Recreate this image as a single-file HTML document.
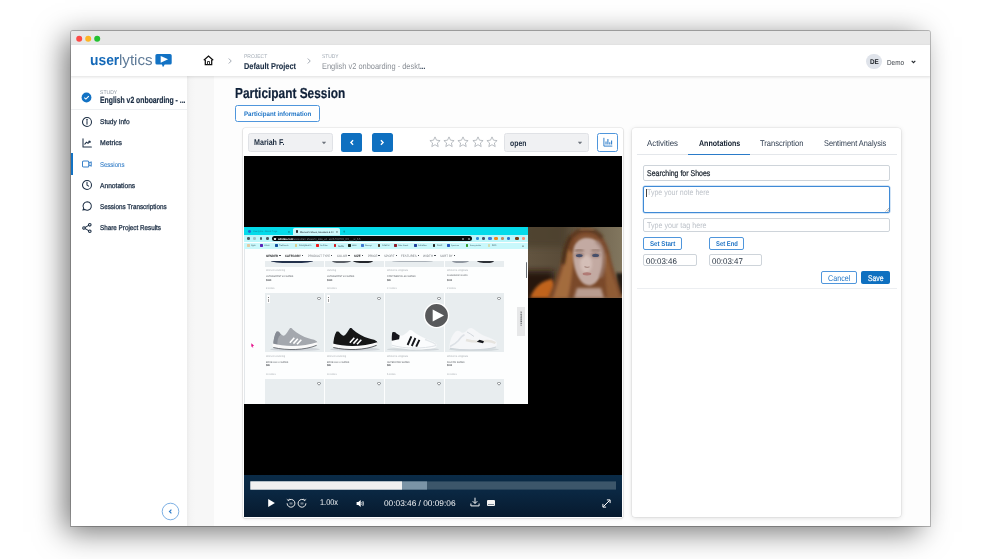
<!DOCTYPE html>
<html><head><meta charset="utf-8"><title>Participant Session</title>
<style>
html,body{margin:0;padding:0;background:#fff;}
body{width:1000px;height:559px;position:relative;overflow:hidden;font-family:"Liberation Sans",sans-serif;}
div,span.t,svg.a{position:absolute;box-sizing:border-box;}
span.t{white-space:nowrap;transform-origin:0 50%;display:block;text-rendering:geometricPrecision;}
</style></head><body>
<div style="left:0;top:0;width:1000px;height:559px;will-change:transform;">
<div style="left:77.00px;top:49.00px;width:830.50px;height:471.00px;background:#fff;box-shadow:0 0 28px 12px rgba(0,0,0,.55);"></div><div style="left:71.00px;top:31.00px;width:859.00px;height:495.00px;background:#fff;border-radius:2px 2px 0 0;box-shadow:0 0 0 .9px rgba(0,0,0,.26);"></div><div style="left:71px;top:31px;width:859px;height:495px;overflow:hidden;border-radius:2px 2px 0 0;"><div style="left:-71px;top:-31px;width:1000px;height:559px;"><div style="left:70.00px;top:31.00px;width:861.00px;height:14.00px;background:#e7e7e7;"></div><svg class="a" style="left:74px;top:33px;" width="30" height="12" viewBox="0 0 30 12"><circle cx="5.2" cy="5.7" r="3" fill="#fc4946"/><circle cx="14.2" cy="5.7" r="3" fill="#fdb525"/><circle cx="23.2" cy="5.7" r="3" fill="#23c131"/></svg><div style="left:70.00px;top:45.00px;width:861.00px;height:481.00px;background:#fdfdfd;"></div><div style="left:187.00px;top:76.00px;width:27.00px;height:450.00px;background:linear-gradient(90deg,#ececec 0,#f4f4f4 3px,#f7f7f7 8px,#f7f7f7 100%);"></div><div style="left:70.00px;top:76.00px;width:117.00px;height:450.00px;background:#fff;"></div><div style="left:70.00px;top:45.00px;width:861.00px;height:31.00px;background:#fff;box-shadow:0 1px 3px rgba(0,0,0,.13);"></div><span class="t" style="left:90.00px;top:51.60px;font-size:15px;line-height:18px;font-weight:700;color:#1469b8;transform:scaleX(0.9215);">user</span><span class="t" style="left:119.40px;top:51.60px;font-size:15px;line-height:18px;font-weight:400;color:#5f7b98;transform:scaleX(1.0077);">lytics</span><svg class="a" style="left:154.5px;top:53px;" width="18" height="16" viewBox="0 0 18 16">
<path d="M2 .9h13.1a1.6 1.6 0 0 1 1.6 1.6v7.5a1.6 1.6 0 0 1-1.6 1.6H9.7L8 14.3 6.9 11.6H2A1.6 1.6 0 0 1 .4 10V2.5A1.6 1.6 0 0 1 2 .9z" fill="#1272c4"/>
<path d="M5.7 2.9 13.1 6.3 5.7 9.7z" fill="#fff"/></svg><svg class="a" style="left:202.5px;top:55.200px;" width="11" height="11" viewBox="0 0 11 11">
<path d="M.8 5.300 5.500 1.100 10.200 5.300" fill="none" stroke="#111" stroke-width="1.25"/>
<path d="M2.300 4.800V9.700H8.700V4.800" fill="none" stroke="#111" stroke-width="1.25"/>
<path d="M4.500 9.700V6.500H6.500V9.700" fill="none" stroke="#222" stroke-width=".9"/></svg><svg class="a" style="left:227.20px;top:56.80px;" width="6" height="8" viewBox="0 0 6 8"><path d="M1.75 1.50L4.25 4 1.75 6.50" fill="none" stroke="#a3aab3" stroke-width="1.0"/></svg><svg class="a" style="left:305.50px;top:56.80px;" width="6" height="8" viewBox="0 0 6 8"><path d="M1.75 1.50L4.25 4 1.75 6.50" fill="none" stroke="#a3aab3" stroke-width="1.0"/></svg><span class="t" style="left:243.60px;top:54.40px;font-size:5.4px;line-height:7px;font-weight:400;color:#a2abb5;transform:scaleX(0.9217);">PROJECT</span><span class="t" style="left:243.60px;top:60.80px;font-size:8.5px;line-height:11px;font-weight:700;color:#1d2f45;transform:scaleX(0.8667);-webkit-text-stroke:.12px #1d2f45;">Default Project</span><span class="t" style="left:322.20px;top:54.40px;font-size:5.4px;line-height:7px;font-weight:400;color:#a2abb5;transform:scaleX(0.9080);">STUDY</span><span class="t" style="left:322.20px;top:60.80px;font-size:8.5px;line-height:11px;font-weight:400;color:#8a8f96;transform:scaleX(0.8750);">English v2 onboarding - deskt</span><span class="t" style="left:420.40px;top:60.80px;font-size:8.5px;line-height:11px;font-weight:700;color:#1d2f45;transform:scaleX(0.7612);">...</span><div style="left:865.90px;top:53.60px;width:15.80px;height:15.80px;background:#dfe3ea;border-radius:50%;"></div><span class="t" style="left:869.60px;top:57.70px;font-size:6.8px;line-height:9px;font-weight:700;color:#1b1f24;transform:scaleX(0.9309);">DE</span><span class="t" style="left:887.20px;top:57.70px;font-size:7.3px;line-height:9px;font-weight:400;color:#3b4047;transform:scaleX(0.8732);">Demo</span><svg class="a" style="left:909.5px;top:58.500px;" width="7" height="6" viewBox="0 0 7 6"><path d="M1.700 1.900 3.500 3.700 5.300 1.900" fill="none" stroke="#23272c" stroke-width="1.150"/></svg><svg class="a" style="left:81px;top:92.100px;" width="11" height="11" viewBox="0 0 11 11"><circle cx="5.500" cy="5.500" r="4.900" fill="#1272c4"/><path d="M3.300 5.600 4.900 7.100 7.800 4.100" fill="none" stroke="#fff" stroke-width="1.100"/></svg><span class="t" style="left:99.80px;top:89.70px;font-size:5.3px;line-height:7px;font-weight:400;color:#8e98a3;transform:scaleX(0.9581);">STUDY</span><span class="t" style="left:99.80px;top:95.00px;font-size:9px;line-height:11px;font-weight:700;color:#1d2f45;transform:scaleX(0.7599);-webkit-text-stroke:.22px #1d2f45;">English v2 onboarding - ...</span><div style="left:70.00px;top:108.60px;width:117.00px;height:1.00px;background:#eef0f2;"></div><div style="left:71.00px;top:153.00px;width:2.40px;height:21.60px;background:#1272c4;"></div><svg class="a" style="left:80.500px;top:115.50px;" width="12" height="12" viewBox="0 0 12 12" fill="none" stroke="#1d2f45" stroke-width="1.05" stroke-linecap="round" stroke-linejoin="round"><circle cx="6" cy="6" r="4.500"/><path d="M6 5.400V8.300"/><circle cx="6" cy="3.800" r=".35" fill="#1d2f45"/></svg><span class="t" style="left:99.80px;top:118.00px;font-size:7px;line-height:9px;font-weight:400;color:#1d2f45;transform:scaleX(0.9388);-webkit-text-stroke:.28px #1d2f45;">Study Info</span><svg class="a" style="left:80.500px;top:136.80px;" width="12" height="12" viewBox="0 0 12 12" fill="none" stroke="#1d2f45" stroke-width="1.05" stroke-linecap="round" stroke-linejoin="round"><path d="M2 1.800V10H10.400"/><path d="M3.800 7.200 5.600 5.200 7 6.300 8.900 4.300"/><path d="M7.700 4.200H9V5.500"/></svg><span class="t" style="left:99.80px;top:139.30px;font-size:7px;line-height:9px;font-weight:400;color:#1d2f45;transform:scaleX(0.9751);-webkit-text-stroke:.28px #1d2f45;">Metrics</span><svg class="a" style="left:80.500px;top:157.90px;" width="12" height="12" viewBox="0 0 12 12" fill="none" stroke="#3b82c9" stroke-width="1.05" stroke-linecap="round" stroke-linejoin="round"><rect x="1.500" y="3" width="6.300" height="6" rx="1.100"/><path d="M7.900 5 10.200 3.900V8.100L7.900 7"/></svg><span class="t" style="left:99.80px;top:160.80px;font-size:7px;line-height:9px;font-weight:400;color:#3b82c9;transform:scaleX(0.8590);-webkit-text-stroke:.12px #3b82c9;">Sessions</span><svg class="a" style="left:80.500px;top:179.10px;" width="12" height="12" viewBox="0 0 12 12" fill="none" stroke="#1d2f45" stroke-width="1.05" stroke-linecap="round" stroke-linejoin="round"><circle cx="6" cy="6" r="4.500"/><path d="M6 3.300V6.100L7.700 7.100"/></svg><span class="t" style="left:99.80px;top:181.60px;font-size:7px;line-height:9px;font-weight:400;color:#1d2f45;transform:scaleX(0.9518);-webkit-text-stroke:.28px #1d2f45;">Annotations</span><svg class="a" style="left:80.500px;top:200.40px;" width="12" height="12" viewBox="0 0 12 12" fill="none" stroke="#1d2f45" stroke-width="1.05" stroke-linecap="round" stroke-linejoin="round"><path d="M6.200 1.800a4.200 4.200 0 1 1-2.500 7.600L1.900 10.100 2.700 8.300A4.200 4.200 0 0 1 6.200 1.800z"/></svg><span class="t" style="left:99.80px;top:202.90px;font-size:7px;line-height:9px;font-weight:400;color:#1d2f45;transform:scaleX(0.9010);-webkit-text-stroke:.28px #1d2f45;">Sessions Transcriptions</span><svg class="a" style="left:80.500px;top:221.70px;" width="12" height="12" viewBox="0 0 12 12" fill="none" stroke="#1d2f45" stroke-width="1.05" stroke-linecap="round" stroke-linejoin="round"><circle cx="8.800" cy="2.800" r="1.300"/><circle cx="3" cy="6" r="1.300"/><circle cx="8.800" cy="9.200" r="1.300"/><path d="M4.200 5.400 7.600 3.400M4.200 6.600 7.600 8.600"/></svg><span class="t" style="left:99.80px;top:224.20px;font-size:7px;line-height:9px;font-weight:400;color:#1d2f45;transform:scaleX(0.9010);-webkit-text-stroke:.28px #1d2f45;">Share Project Results</span><svg class="a" style="left:160.500px;top:502.100px;" width="19" height="19" viewBox="0 0 19 19"><circle cx="9.500" cy="9.500" r="8.300" fill="#fff" stroke="#5a9bdc" stroke-width=".8"/><path d="M10.400 7.600 8.500 9.500 10.400 11.400" fill="none" stroke="#2f7cc9" stroke-width="1.200"/></svg><span class="t" style="left:235.10px;top:85.20px;font-size:14.5px;line-height:18px;font-weight:700;color:#0f2038;transform:scaleX(0.8189);-webkit-text-stroke:.2px #0f2038;">Participant Session</span><div style="left:235.00px;top:105.00px;width:85.00px;height:17.00px;background:#fff;border:1px solid #4f96dc;border-radius:2.500px;"></div><span class="t" style="left:243.90px;top:111.40px;font-size:6.6px;line-height:8px;font-weight:700;color:#2176c7;transform:scaleX(0.9311);">Participant information</span><div style="left:243.00px;top:128.00px;width:380.00px;height:389.50px;background:#fff;border-radius:2px;box-shadow:0 0 0 .6px rgba(0,0,0,.10),0 1px 3px rgba(0,0,0,.10);"></div><div style="left:248.40px;top:133.20px;width:84.50px;height:18.40px;background:#f0f1f3;border:1px solid #e0e2e6;border-radius:2.500px;"></div><span class="t" style="left:254.20px;top:137.40px;font-size:8.4px;line-height:11px;font-weight:700;color:#1b2a3d;transform:scaleX(0.8509);">Mariah F.</span><svg class="a" style="left:321px;top:141.200px;" width="6" height="4" viewBox="0 0 6 4"><path d="M.8 .7H5.200L3 3.300z" fill="#6d737c"/></svg><div style="left:341.10px;top:133.10px;width:21.30px;height:18.50px;background:#0f70c0;border-radius:2.500px;"></div><svg class="a" style="left:346.75px;top:137.900px;" width="10" height="9" viewBox="0 0 10 9"><path d="M6.100 2.200 3.900 4.500 6.100 6.800" fill="none" stroke="#fff" stroke-width="1.350"/></svg><div style="left:371.80px;top:133.10px;width:21.30px;height:18.50px;background:#0f70c0;border-radius:2.500px;"></div><svg class="a" style="left:377.45px;top:137.900px;" width="10" height="9" viewBox="0 0 10 9"><path d="M3.900 2.200 6.100 4.500 3.900 6.800" fill="none" stroke="#fff" stroke-width="1.350"/></svg><svg class="a" style="left:428.60px;top:135.600px;" width="12" height="12" viewBox="0 0 12 12"><path d="M6 .9 7.500 4.200 11.100 4.600 8.400 7 9.200 10.600 6 8.700 2.800 10.600 3.600 7 .9 4.600 4.500 4.200z" fill="#fff" stroke="#a4a9b0" stroke-width=".75" stroke-linejoin="round"/></svg><svg class="a" style="left:443.00px;top:135.600px;" width="12" height="12" viewBox="0 0 12 12"><path d="M6 .9 7.500 4.200 11.100 4.600 8.400 7 9.200 10.600 6 8.700 2.800 10.600 3.600 7 .9 4.600 4.500 4.200z" fill="#fff" stroke="#a4a9b0" stroke-width=".75" stroke-linejoin="round"/></svg><svg class="a" style="left:457.40px;top:135.600px;" width="12" height="12" viewBox="0 0 12 12"><path d="M6 .9 7.500 4.200 11.100 4.600 8.400 7 9.200 10.600 6 8.700 2.800 10.600 3.600 7 .9 4.600 4.500 4.200z" fill="#fff" stroke="#a4a9b0" stroke-width=".75" stroke-linejoin="round"/></svg><svg class="a" style="left:471.80px;top:135.600px;" width="12" height="12" viewBox="0 0 12 12"><path d="M6 .9 7.500 4.200 11.100 4.600 8.400 7 9.200 10.600 6 8.700 2.800 10.600 3.600 7 .9 4.600 4.500 4.200z" fill="#fff" stroke="#a4a9b0" stroke-width=".75" stroke-linejoin="round"/></svg><svg class="a" style="left:486.20px;top:135.600px;" width="12" height="12" viewBox="0 0 12 12"><path d="M6 .9 7.500 4.200 11.100 4.600 8.400 7 9.200 10.600 6 8.700 2.800 10.600 3.600 7 .9 4.600 4.500 4.200z" fill="#fff" stroke="#a4a9b0" stroke-width=".75" stroke-linejoin="round"/></svg><div style="left:504.20px;top:133.20px;width:84.50px;height:18.40px;background:#f0f1f3;border:1px solid #e0e2e6;border-radius:2.500px;"></div><span class="t" style="left:509.70px;top:137.80px;font-size:8.4px;line-height:11px;font-weight:700;color:#1b2a3d;transform:scaleX(0.8194);">open</span><svg class="a" style="left:576.500px;top:141.200px;" width="6" height="4" viewBox="0 0 6 4"><path d="M.8 .7H5.200L3 3.300z" fill="#6d737c"/></svg><div style="left:597.10px;top:133.00px;width:20.90px;height:18.90px;background:#fff;border:1px solid #4f96dc;border-radius:2.500px;"></div><svg class="a" style="left:602.600px;top:137.300px;" width="10" height="10" viewBox="0 0 10 10" fill="none" stroke="#2a7bc9" stroke-width=".95">
<path d="M.9 .8V9.100H9.300"/><path d="M3 7.600V4.600M4.900 7.600V2.100M6.800 7.600V5.200M8.600 7.600V3.400" stroke-width="1.050"/></svg><div style="left:632.00px;top:128.00px;width:269.00px;height:389.00px;background:#fff;border-radius:3px;box-shadow:0 0 0 .6px rgba(0,0,0,.07),0 1px 5px rgba(0,0,0,.13);"></div><span class="t" style="left:647.00px;top:138.00px;font-size:8.3px;line-height:10px;font-weight:400;color:#2c3a4d;transform:scaleX(0.9470);">Activities</span><span class="t" style="left:698.50px;top:138.00px;font-size:8.3px;line-height:10px;font-weight:700;color:#101c2c;transform:scaleX(0.8532);">Annotations</span><span class="t" style="left:760.30px;top:138.00px;font-size:8.3px;line-height:10px;font-weight:400;color:#2c3a4d;transform:scaleX(0.9107);">Transcription</span><span class="t" style="left:824.00px;top:138.00px;font-size:8.3px;line-height:10px;font-weight:400;color:#2c3a4d;transform:scaleX(0.8886);">Sentiment Analysis</span><div style="left:636.60px;top:154.10px;width:260.40px;height:0.80px;background:#e4e7eb;"></div><div style="left:688.20px;top:153.50px;width:61.80px;height:1.30px;background:#2a7bc9;"></div><div style="left:643.20px;top:165.30px;width:247.30px;height:15.60px;background:#fff;border:1px solid #ced4da;border-radius:2px;"></div><span class="t" style="left:646.80px;top:168.30px;font-size:8.3px;line-height:10px;font-weight:400;color:#17202b;transform:scaleX(0.8419);-webkit-text-stroke:.22px #17202b;">Searching for Shoes</span><div style="left:643.20px;top:186.20px;width:247.30px;height:26.90px;background:#fff;border:1px solid #3f8ad6;border-radius:2px;box-shadow:0 0 0 .5px rgba(63,138,214,.45);"></div><div style="left:646.30px;top:189.30px;width:0.80px;height:8.00px;background:#444;"></div><span class="t" style="left:647.40px;top:188.20px;font-size:8.2px;line-height:10px;font-weight:400;color:#bcc1c8;transform:scaleX(0.8582);">Type your note here</span><svg class="a" style="left:884.500px;top:207.200px;" width="5" height="5" viewBox="0 0 5 5"><path d="M.6 4.600 4.600 .6M2.600 4.600 4.600 2.600" stroke="#777" stroke-width=".6"/></svg><div style="left:643.20px;top:218.40px;width:247.30px;height:13.40px;background:#fff;border:1px solid #ced4da;border-radius:2px;"></div><span class="t" style="left:646.80px;top:220.50px;font-size:8.2px;line-height:10px;font-weight:400;color:#bcc1c8;transform:scaleX(0.8714);">Type your tag here</span><div style="left:643.20px;top:237.40px;width:38.70px;height:13.00px;background:#fff;border:1px solid #4f96dc;border-radius:2px;"></div><span class="t" style="left:649.80px;top:240.10px;font-size:7px;line-height:9px;font-weight:700;color:#1f73c4;transform:scaleX(0.8786);">Set Start</span><div style="left:708.80px;top:237.40px;width:35.50px;height:13.00px;background:#fff;border:1px solid #4f96dc;border-radius:2px;"></div><span class="t" style="left:715.60px;top:240.10px;font-size:7px;line-height:9px;font-weight:700;color:#1f73c4;transform:scaleX(0.8365);">Set End</span><div style="left:643.20px;top:254.40px;width:53.50px;height:11.80px;background:#fff;border:1px solid #ced4da;border-radius:2px;"></div><span class="t" style="left:646.30px;top:255.50px;font-size:8.3px;line-height:10px;font-weight:400;color:#1f2b3a;transform:scaleX(0.9537);">00:03:46</span><div style="left:708.80px;top:254.40px;width:53.20px;height:11.80px;background:#fff;border:1px solid #ced4da;border-radius:2px;"></div><span class="t" style="left:711.90px;top:255.50px;font-size:8.3px;line-height:10px;font-weight:400;color:#1f2b3a;transform:scaleX(0.9537);">00:03:47</span><div style="left:820.50px;top:271.20px;width:36.50px;height:13.00px;background:#fff;border:1px solid #4f96dc;border-radius:2px;"></div><span class="t" style="left:827.60px;top:272.80px;font-size:8.3px;line-height:10px;font-weight:400;color:#2176c7;transform:scaleX(0.8634);">Cancel</span><div style="left:861.10px;top:271.20px;width:29.40px;height:13.00px;background:#0f70c0;border-radius:2px;"></div><span class="t" style="left:868.00px;top:272.80px;font-size:8.3px;line-height:10px;font-weight:400;color:#fff;transform:scaleX(0.8244);-webkit-text-stroke:.2px #fff;">Save</span><div style="left:636.60px;top:288.20px;width:260.40px;height:0.80px;background:#eceef1;"></div><div style="left:243.60px;top:155.60px;width:378.90px;height:361.40px;background:#000;"></div><div style="left:244px;top:226.6px;width:283.8px;height:177.4px;background:#fdfefe;overflow:hidden;"><div style="left:-244px;top:-226.6px;width:1000px;height:559px;"><div style="left:244.00px;top:226.60px;width:283.80px;height:8.00px;background:#04dbea;"></div><div style="left:248.40px;top:229.90px;width:2.90px;height:2.90px;background:#1f6fd6;border-radius:50%;"></div><span class="t" style="left:252.70px;top:230.00px;font-size:2.56px;line-height:4px;font-weight:400;color:#16889a;transform:scaleX(0.9230);">Userlytics - Blank Page</span><span class="t" style="left:288.30px;top:230.00px;font-size:3.34px;line-height:4px;font-weight:700;color:#0c5560;transform:scaleX(0.9216);">×</span><div style="left:292.60px;top:228.00px;width:47.60px;height:6.70px;background:#cdf9fc;border-radius:1.800px 1.800px 0 0;"></div><div style="left:295.60px;top:230.00px;width:2.60px;height:2.60px;background:#2b2f33;border-radius:30%;"></div><span class="t" style="left:299.90px;top:230.50px;font-size:2.43px;line-height:3px;font-weight:700;color:#3b4a52;transform:scaleX(0.9198);">Women's Shoes, Sneakers &amp; Cl</span><span class="t" style="left:335.60px;top:230.00px;font-size:3.34px;line-height:4px;font-weight:700;color:#333;transform:scaleX(0.9216);">×</span><span class="t" style="left:343.40px;top:228.90px;font-size:4.2px;line-height:6px;font-weight:700;color:#0b5e6a;transform:scaleX(0.8968);">+</span><div style="left:244.00px;top:234.60px;width:283.80px;height:7.90px;background:#bdf6fa;"></div><div style="left:246.90px;top:237.20px;width:2.80px;height:2.70px;background:#3d4e55;border-radius:45%;opacity:.9;"></div><div style="left:253.30px;top:237.20px;width:2.80px;height:2.70px;background:#9bbcc2;border-radius:45%;opacity:.9;"></div><div style="left:259.60px;top:237.20px;width:2.80px;height:2.70px;background:#3d4e55;border-radius:45%;opacity:.9;"></div><div style="left:265.90px;top:237.20px;width:2.80px;height:2.70px;background:#3d4e55;border-radius:45%;opacity:.9;"></div><div style="left:271.60px;top:235.80px;width:200.80px;height:5.60px;background:#07090b;border-radius:2.800px;"></div><div style="left:274.40px;top:237.70px;width:1.60px;height:1.90px;background:#f0f0f0;border-radius:25%;"></div><span class="t" style="left:277.90px;top:237.20px;font-size:2.9px;line-height:4px;font-weight:700;color:#fff;transform:scaleX(0.9556);">adidas.com</span><span class="t" style="left:293.20px;top:237.20px;font-size:2.9px;line-height:4px;font-weight:400;color:#8b9299;transform:scaleX(0.9174);">/us/women-shoes?v_size_en_us=6.5%7C6_6.5___w_6.5</span><div style="left:462.00px;top:237.50px;width:2.20px;height:2.20px;background:#8a8f94;border-radius:50%;"></div><div style="left:468.00px;top:237.50px;width:2.20px;height:2.20px;background:#8a8f94;border-radius:50%;"></div><div style="left:475.60px;top:236.90px;width:3.30px;height:3.20px;background:#2f8fd8;border-radius:38%;"></div><div style="left:482.20px;top:236.90px;width:3.30px;height:3.20px;background:#44506a;border-radius:38%;"></div><div style="left:488.40px;top:236.90px;width:3.30px;height:3.20px;background:#3d7be0;border-radius:38%;"></div><div style="left:494.40px;top:236.90px;width:3.30px;height:3.20px;background:#f08a1e;border-radius:38%;"></div><div style="left:500.60px;top:236.90px;width:3.30px;height:3.20px;background:#c08d6a;border-radius:38%;"></div><div style="left:507.00px;top:236.90px;width:3.30px;height:3.20px;background:#2a7ad0;border-radius:38%;"></div><div style="left:515.40px;top:236.90px;width:3.30px;height:3.20px;background:#7a3d16;border-radius:38%;"></div><div style="left:522.00px;top:236.90px;width:3.30px;height:3.20px;background:#f3907c;border-radius:38%;"></div><div style="left:244.00px;top:242.50px;width:283.80px;height:6.10px;background:#c9f8fb;"></div><div style="left:246.80px;top:244.00px;width:2.80px;height:3.00px;background:#e3c9a0;border-radius:22%;"></div><span class="t" style="left:250.80px;top:244.70px;font-size:2.2px;line-height:3px;font-weight:400;color:#33505a;transform:scaleX(0.9200);">Apps</span><div style="left:260.00px;top:244.00px;width:2.80px;height:3.00px;background:#5a22b8;border-radius:22%;"></div><span class="t" style="left:264.00px;top:244.70px;font-size:2.16px;line-height:3px;font-weight:400;color:#33505a;transform:scaleX(0.9213);">Yahoo</span><div style="left:274.80px;top:244.00px;width:2.80px;height:3.00px;background:#13529f;border-radius:22%;"></div><span class="t" style="left:278.80px;top:244.70px;font-size:2.07px;line-height:3px;font-weight:400;color:#33505a;transform:scaleX(0.9213);">TheChurch</span><div style="left:294.60px;top:244.00px;width:2.80px;height:3.00px;background:#d9cc8a;border-radius:22%;"></div><span class="t" style="left:298.60px;top:244.70px;font-size:2.21px;line-height:3px;font-weight:400;color:#33505a;transform:scaleX(0.9206);">FamilySearch</span><div style="left:316.20px;top:244.00px;width:2.80px;height:3.00px;background:#ee1c1c;border-radius:22%;"></div><span class="t" style="left:320.20px;top:244.70px;font-size:2.1px;line-height:3px;font-weight:400;color:#33505a;transform:scaleX(0.9300);">YouTube</span><div style="left:333.60px;top:244.00px;width:2.80px;height:3.00px;background:#d0161e;border-radius:22%;"></div><span class="t" style="left:337.60px;top:244.70px;font-size:2.43px;line-height:3px;font-weight:400;color:#33505a;transform:scaleX(0.9206);">Netflix</span><div style="left:347.80px;top:244.00px;width:2.80px;height:3.00px;background:#14241c;border-radius:22%;"></div><span class="t" style="left:351.80px;top:244.70px;font-size:2.32px;line-height:3px;font-weight:400;color:#33505a;transform:scaleX(0.9233);">Hulu</span><div style="left:361.00px;top:244.00px;width:2.80px;height:3.00px;background:#3f78d0;border-radius:22%;"></div><span class="t" style="left:365.00px;top:244.70px;font-size:2.09px;line-height:3px;font-weight:400;color:#33505a;transform:scaleX(0.9237);">Disney+</span><div style="left:377.60px;top:244.00px;width:2.80px;height:3.00px;background:#4a3a2a;border-radius:22%;"></div><span class="t" style="left:381.60px;top:244.70px;font-size:2.25px;line-height:3px;font-weight:400;color:#33505a;transform:scaleX(0.9195);">Amazon</span><div style="left:394.00px;top:244.00px;width:2.80px;height:3.00px;background:#8c1c2c;border-radius:22%;"></div><span class="t" style="left:398.00px;top:244.70px;font-size:2.1px;line-height:3px;font-weight:400;color:#33505a;transform:scaleX(0.9286);">Alder Creek</span><div style="left:414.20px;top:244.00px;width:2.80px;height:3.00px;background:#1f3f9a;border-radius:22%;"></div><span class="t" style="left:418.20px;top:244.70px;font-size:2.05px;line-height:3px;font-weight:400;color:#33505a;transform:scaleX(0.9204);">SoCalGas</span><div style="left:432.60px;top:244.00px;width:2.80px;height:3.00px;background:#222;border-radius:22%;"></div><span class="t" style="left:436.60px;top:244.70px;font-size:2.11px;line-height:3px;font-weight:400;color:#33505a;transform:scaleX(0.9265);">PG&amp;E</span><div style="left:447.20px;top:244.00px;width:2.80px;height:3.00px;background:#2358c0;border-radius:22%;"></div><span class="t" style="left:451.20px;top:244.70px;font-size:2.03px;line-height:3px;font-weight:400;color:#33505a;transform:scaleX(0.9259);">Spectrum</span><div style="left:465.60px;top:244.00px;width:2.80px;height:3.00px;background:#2f9a2a;border-radius:22%;"></div><span class="t" style="left:469.60px;top:244.70px;font-size:1.99px;line-height:3px;font-weight:400;color:#33505a;transform:scaleX(0.9227);">SurveyJunkie</span><div style="left:487.60px;top:244.00px;width:2.80px;height:3.00px;background:#d2dcae;border-radius:22%;"></div><span class="t" style="left:491.60px;top:244.70px;font-size:2.15px;line-height:3px;font-weight:400;color:#33505a;transform:scaleX(0.9233);">2020</span><span class="t" style="left:522.00px;top:243.60px;font-size:3.4px;line-height:5px;font-weight:700;color:#333;transform:scaleX(0.9521);">»</span><span class="t" style="left:266.20px;top:254.30px;font-size:3.2px;line-height:4px;font-weight:700;color:#15181b;transform:scaleX(0.8427);letter-spacing:.12px;">GENDER</span><div style="left:279.30px;top:255.30px;width:1.30px;height:0.70px;background:#4a4f55;"></div><span class="t" style="left:285.10px;top:254.30px;font-size:3.2px;line-height:4px;font-weight:700;color:#15181b;transform:scaleX(0.8462);letter-spacing:.12px;">CATEGORY</span><div style="left:301.90px;top:255.30px;width:1.30px;height:0.70px;background:#4a4f55;"></div><span class="t" style="left:308.10px;top:254.30px;font-size:3.2px;line-height:4px;font-weight:400;color:#6f757b;transform:scaleX(0.8404);letter-spacing:.12px;">PRODUCT TYPE</span><div style="left:331.20px;top:255.30px;width:1.30px;height:0.70px;background:#4a4f55;"></div><span class="t" style="left:337.20px;top:254.30px;font-size:3.2px;line-height:4px;font-weight:400;color:#6f757b;transform:scaleX(0.8545);letter-spacing:.12px;">COLOR</span><div style="left:348.40px;top:255.30px;width:1.30px;height:0.70px;background:#4a4f55;"></div><span class="t" style="left:354.20px;top:254.30px;font-size:3.2px;line-height:4px;font-weight:700;color:#15181b;transform:scaleX(0.8973);letter-spacing:.12px;">SIZE</span><div style="left:362.00px;top:255.30px;width:1.30px;height:0.70px;background:#4a4f55;"></div><span class="t" style="left:367.80px;top:254.30px;font-size:3.2px;line-height:4px;font-weight:400;color:#6f757b;transform:scaleX(0.9281);letter-spacing:.12px;">PRICE</span><div style="left:378.40px;top:255.30px;width:1.30px;height:0.70px;background:#4a4f55;"></div><span class="t" style="left:384.00px;top:254.30px;font-size:3.2px;line-height:4px;font-weight:400;color:#6f757b;transform:scaleX(0.9192);letter-spacing:.12px;">SPORT</span><div style="left:395.60px;top:255.30px;width:1.30px;height:0.70px;background:#4a4f55;"></div><span class="t" style="left:400.80px;top:254.30px;font-size:3.2px;line-height:4px;font-weight:400;color:#6f757b;transform:scaleX(0.8909);letter-spacing:.12px;">FEATURES</span><div style="left:417.60px;top:255.30px;width:1.30px;height:0.70px;background:#4a4f55;"></div><span class="t" style="left:423.20px;top:254.30px;font-size:3.2px;line-height:4px;font-weight:400;color:#6f757b;transform:scaleX(0.9233);letter-spacing:.12px;">WIDTH</span><div style="left:434.40px;top:255.30px;width:1.30px;height:0.70px;background:#4a4f55;"></div><span class="t" style="left:439.80px;top:254.30px;font-size:3.2px;line-height:4px;font-weight:400;color:#6f757b;transform:scaleX(0.8696);letter-spacing:.12px;">SORT BY</span><div style="left:453.60px;top:255.30px;width:1.30px;height:0.70px;background:#4a4f55;"></div><div style="left:264.50px;top:260.80px;width:59.30px;height:5.90px;background:#e8edef;"></div><span class="t" style="left:266.30px;top:269.30px;font-size:2.7px;line-height:4px;font-weight:400;color:#a6abb0;transform:scaleX(0.8704);">Women's Running</span><span class="t" style="left:266.30px;top:275.10px;font-size:2.5px;line-height:3px;font-weight:400;color:#5b6066;transform:scaleX(0.9244);">ULTRABOOST 20 SHOES</span><span class="t" style="left:266.30px;top:278.70px;font-size:2.6px;line-height:4px;font-weight:700;color:#33373c;transform:scaleX(0.8995);">$180</span><span class="t" style="left:266.30px;top:287.00px;font-size:2.6px;line-height:4px;font-weight:400;color:#a6abb0;transform:scaleX(0.9457);">8 colors</span><div style="left:264.50px;top:293.30px;width:59.30px;height:59.10px;background:#e8edef;"></div><span class="t" style="left:266.30px;top:354.90px;font-size:2.7px;line-height:4px;font-weight:400;color:#a6abb0;transform:scaleX(0.8704);">Women's Running</span><span class="t" style="left:266.30px;top:360.60px;font-size:2.5px;line-height:3px;font-weight:400;color:#5b6066;transform:scaleX(0.9178);">EDGE LUX 3 SHOES</span><span class="t" style="left:266.30px;top:364.30px;font-size:2.6px;line-height:4px;font-weight:700;color:#33373c;transform:scaleX(0.8780);">$85</span><span class="t" style="left:266.30px;top:372.60px;font-size:2.6px;line-height:4px;font-weight:400;color:#a6abb0;transform:scaleX(0.9116);">10 colors</span><div style="left:264.50px;top:379.00px;width:59.30px;height:26.00px;background:#e8edef;"></div><svg class="a" style="left:316.60px;top:296.90px;" width="4" height="3.400" viewBox="0 0 4 3.400"><path d="M2 3.200.4 1.500A.9.9 0 0 1 2 .8 .9.9 0 0 1 3.600 1.500z" fill="#fff" stroke="#3d4248" stroke-width=".55"/></svg><svg class="a" style="left:316.60px;top:382.40px;" width="4" height="3.400" viewBox="0 0 4 3.400"><path d="M2 3.200.4 1.500A.9.9 0 0 1 2 .8 .9.9 0 0 1 3.600 1.500z" fill="#fff" stroke="#3d4248" stroke-width=".55"/></svg><div style="left:324.90px;top:260.80px;width:59.30px;height:5.90px;background:#e8edef;"></div><span class="t" style="left:326.70px;top:269.30px;font-size:2.7px;line-height:4px;font-weight:400;color:#a6abb0;transform:scaleX(0.8986);">Running</span><span class="t" style="left:326.70px;top:275.10px;font-size:2.5px;line-height:3px;font-weight:400;color:#5b6066;transform:scaleX(0.9244);">ULTRABOOST 20 SHOES</span><span class="t" style="left:326.70px;top:278.70px;font-size:2.6px;line-height:4px;font-weight:700;color:#33373c;transform:scaleX(0.8995);">$180</span><span class="t" style="left:326.70px;top:287.00px;font-size:2.6px;line-height:4px;font-weight:400;color:#a6abb0;transform:scaleX(0.9116);">18 colors</span><div style="left:324.90px;top:293.30px;width:59.30px;height:59.10px;background:#e8edef;"></div><span class="t" style="left:326.70px;top:354.90px;font-size:2.7px;line-height:4px;font-weight:400;color:#a6abb0;transform:scaleX(0.8704);">Women's Running</span><span class="t" style="left:326.70px;top:360.60px;font-size:2.5px;line-height:3px;font-weight:400;color:#5b6066;transform:scaleX(0.9178);">EDGE LUX 3 SHOES</span><span class="t" style="left:326.70px;top:364.30px;font-size:2.6px;line-height:4px;font-weight:700;color:#33373c;transform:scaleX(0.8780);">$85</span><span class="t" style="left:326.70px;top:372.60px;font-size:2.6px;line-height:4px;font-weight:400;color:#a6abb0;transform:scaleX(0.9116);">10 colors</span><div style="left:324.90px;top:379.00px;width:59.30px;height:26.00px;background:#e8edef;"></div><svg class="a" style="left:377.00px;top:296.90px;" width="4" height="3.400" viewBox="0 0 4 3.400"><path d="M2 3.200.4 1.500A.9.9 0 0 1 2 .8 .9.9 0 0 1 3.600 1.500z" fill="#fff" stroke="#3d4248" stroke-width=".55"/></svg><svg class="a" style="left:377.00px;top:382.40px;" width="4" height="3.400" viewBox="0 0 4 3.400"><path d="M2 3.200.4 1.500A.9.9 0 0 1 2 .8 .9.9 0 0 1 3.600 1.500z" fill="#fff" stroke="#3d4248" stroke-width=".55"/></svg><div style="left:385.20px;top:260.80px;width:59.30px;height:5.90px;background:#e8edef;"></div><span class="t" style="left:387.00px;top:269.30px;font-size:2.7px;line-height:4px;font-weight:400;color:#a6abb0;transform:scaleX(0.9366);">Women's Originals</span><span class="t" style="left:387.00px;top:275.10px;font-size:2.5px;line-height:3px;font-weight:400;color:#5b6066;transform:scaleX(0.9440);">CONTINENTAL 80 SHOES</span><span class="t" style="left:387.00px;top:278.70px;font-size:2.6px;line-height:4px;font-weight:700;color:#33373c;transform:scaleX(0.8780);">$80</span><span class="t" style="left:387.00px;top:287.00px;font-size:2.6px;line-height:4px;font-weight:400;color:#a6abb0;transform:scaleX(0.9116);">14 colors</span><div style="left:385.20px;top:293.30px;width:59.30px;height:59.10px;background:#e8edef;"></div><span class="t" style="left:387.00px;top:354.90px;font-size:2.7px;line-height:4px;font-weight:400;color:#a6abb0;transform:scaleX(0.9366);">Women's Originals</span><span class="t" style="left:387.00px;top:360.60px;font-size:2.5px;line-height:3px;font-weight:400;color:#5b6066;transform:scaleX(0.9207);">SUPERSTAR SHOES</span><span class="t" style="left:387.00px;top:364.30px;font-size:2.6px;line-height:4px;font-weight:700;color:#33373c;transform:scaleX(0.8780);">$80</span><span class="t" style="left:387.00px;top:372.60px;font-size:2.6px;line-height:4px;font-weight:400;color:#a6abb0;transform:scaleX(0.9457);">5 colors</span><div style="left:385.20px;top:379.00px;width:59.30px;height:26.00px;background:#e8edef;"></div><svg class="a" style="left:437.30px;top:296.90px;" width="4" height="3.400" viewBox="0 0 4 3.400"><path d="M2 3.200.4 1.500A.9.9 0 0 1 2 .8 .9.9 0 0 1 3.600 1.500z" fill="#fff" stroke="#3d4248" stroke-width=".55"/></svg><svg class="a" style="left:437.30px;top:382.40px;" width="4" height="3.400" viewBox="0 0 4 3.400"><path d="M2 3.200.4 1.500A.9.9 0 0 1 2 .8 .9.9 0 0 1 3.600 1.500z" fill="#fff" stroke="#3d4248" stroke-width=".55"/></svg><div style="left:445.00px;top:260.80px;width:59.30px;height:5.90px;background:#e8edef;"></div><span class="t" style="left:446.80px;top:269.30px;font-size:2.7px;line-height:4px;font-weight:400;color:#a6abb0;transform:scaleX(0.9366);">Women's Originals</span><span class="t" style="left:446.80px;top:275.10px;font-size:2.2px;line-height:3px;font-weight:400;color:#5b6066;transform:scaleX(0.9266);">SAMBAROSE SHOES</span><span class="t" style="left:446.80px;top:278.70px;font-size:2.6px;line-height:4px;font-weight:700;color:#33373c;transform:scaleX(0.8649);">$100</span><span class="t" style="left:446.80px;top:287.00px;font-size:2.6px;line-height:4px;font-weight:400;color:#a6abb0;transform:scaleX(0.9677);">2 colors</span><div style="left:445.00px;top:293.30px;width:59.30px;height:59.10px;background:#e8edef;"></div><span class="t" style="left:446.80px;top:354.90px;font-size:2.7px;line-height:4px;font-weight:400;color:#a6abb0;transform:scaleX(0.9366);">Women's Originals</span><span class="t" style="left:446.80px;top:360.60px;font-size:2.5px;line-height:3px;font-weight:400;color:#5b6066;transform:scaleX(0.9047);">FALCON SHOES</span><span class="t" style="left:446.80px;top:364.30px;font-size:2.6px;line-height:4px;font-weight:700;color:#33373c;transform:scaleX(0.8649);">$100</span><span class="t" style="left:446.80px;top:372.60px;font-size:2.6px;line-height:4px;font-weight:400;color:#a6abb0;transform:scaleX(0.9116);">10 colors</span><div style="left:445.00px;top:379.00px;width:59.30px;height:26.00px;background:#e8edef;"></div><svg class="a" style="left:497.10px;top:296.90px;" width="4" height="3.400" viewBox="0 0 4 3.400"><path d="M2 3.200.4 1.500A.9.9 0 0 1 2 .8 .9.9 0 0 1 3.600 1.500z" fill="#fff" stroke="#3d4248" stroke-width=".55"/></svg><svg class="a" style="left:497.10px;top:382.40px;" width="4" height="3.400" viewBox="0 0 4 3.400"><path d="M2 3.200.4 1.500A.9.9 0 0 1 2 .8 .9.9 0 0 1 3.600 1.500z" fill="#fff" stroke="#3d4248" stroke-width=".55"/></svg><div style="left:267.00px;top:295.40px;width:2.90px;height:8.00px;background:#fdfdfd;"></div><div style="left:267.80px;top:296.60px;width:1.30px;height:1.20px;background:#555;opacity:.8;"></div><div style="left:268.00px;top:298.60px;width:0.90px;height:3.60px;background:#777;opacity:.7;"></div><div style="left:327.40px;top:295.40px;width:2.90px;height:8.00px;background:#fdfdfd;"></div><div style="left:328.20px;top:296.60px;width:1.30px;height:1.20px;background:#555;opacity:.8;"></div><div style="left:328.40px;top:298.60px;width:0.90px;height:3.60px;background:#777;opacity:.7;"></div><div style="left:271.00px;top:260.80px;width:42.00px;height:2.30px;background:#22304a;border-radius:0 0 50% 50%/0 0 100% 100%;"></div><div style="left:332.00px;top:260.80px;width:19.00px;height:2.00px;background:#4a4f57;border-radius:0 0 60% 40%/0 0 100% 100%;opacity:.9;"></div><div style="left:353.00px;top:260.80px;width:20.00px;height:2.10px;background:#23262b;border-radius:0 0 40% 60%/0 0 100% 100%;"></div><div style="left:391.50px;top:260.80px;width:41.00px;height:1.70px;background:#aab1b8;border-radius:0 0 50% 50%/0 0 100% 100%;"></div><div style="left:451.50px;top:260.80px;width:17.00px;height:1.90px;background:#9097a0;border-radius:0 0 60% 40%/0 0 100% 100%;"></div><div style="left:476.50px;top:260.80px;width:17.00px;height:2.00px;background:#2d3036;border-radius:0 0 40% 60%/0 0 100% 100%;"></div><svg class="a" style="left:264.50px;top:293.300px;" width="59.300" height="59.100" viewBox="0 0 59.300 59.100"><defs><filter id="sb264"><feGaussianBlur stdDeviation=".28"/></filter></defs><g filter="url(#sb264)"><ellipse cx="30" cy="56.300" rx="25" ry="1.700" fill="#b9c0c6" opacity=".55"/><path d="M8.200 52C8.400 47 9.600 41.800 11.400 38.800c1.200-.7 2.500-.2 3.300 1C16.200 41.900 17.800 42.900 19.400 42.600 21.400 41.300 22.900 37.800 24.700 35.400c1.100-.7 2.300-.2 3.100 1C32 40.400 38 43.600 44.200 45.400 48 46.400 51 47 52 48.600c.7 1.600 0 3-1.500 3.800C40 55.400 22 55.500 8.200 52z" fill="#a4a8ae"/><path d="M8.200 52C8.400 47 9.600 41.800 11.400 38.800c1.200-.7 2.500-.2 3.300 1l1 1.800C13 44 12 48 12.500 52.800z" fill="#878c95"/><path d="M7.700 50.600C20 54.200 40 53.600 52.200 49.300c.6 1 .3 2.100-.5 2.900C40 57.200 22 57.500 8.300 54.400 7.600 53.400 7.500 52 7.700 50.600z" fill="#fafafa"/><path d="M8.300 54.500C22 57.700 40 57.300 51.700 52.300" fill="none" stroke="#474b52" stroke-width=".75"/><path d="M24.800 49.800 29.300 44.800M28.400 50.600 32.800 45.800M32 51.200 36.300 46.700" stroke="#fff" stroke-width="1.600"/></g></svg><svg class="a" style="left:324.90px;top:293.300px;" width="59.300" height="59.100" viewBox="0 0 59.300 59.100"><defs><filter id="sb324"><feGaussianBlur stdDeviation=".28"/></filter></defs><g filter="url(#sb324)"><ellipse cx="30" cy="56.300" rx="25" ry="1.700" fill="#b9c0c6" opacity=".55"/><path d="M8.200 52C8.400 47 9.600 41.800 11.400 38.800c1.200-.7 2.500-.2 3.300 1C16.200 41.900 17.800 42.900 19.400 42.600 21.400 41.300 22.900 37.800 24.700 35.400c1.100-.7 2.300-.2 3.100 1C32 40.400 38 43.600 44.200 45.400 48 46.400 51 47 52 48.600c.7 1.600 0 3-1.500 3.800C40 55.400 22 55.500 8.200 52z" fill="#121418"/><path d="M7.700 50.600C20 54.200 40 53.600 52.200 49.300c.6 1 .3 2.100-.5 2.900C40 57.200 22 57.500 8.300 54.400 7.600 53.400 7.500 52 7.700 50.600z" fill="#fafafa"/><path d="M8.300 54.500C22 57.700 40 57.300 51.700 52.300" fill="none" stroke="#2b2e33" stroke-width=".75"/><path d="M24.800 49.800 29.300 44.800M28.400 50.600 32.800 45.800M32 51.200 36.300 46.700" stroke="#fff" stroke-width="1.600"/></g></svg><svg class="a" style="left:385.20px;top:293.300px;" width="59.300" height="59.100" viewBox="0 0 59.300 59.100"><defs><filter id="sb385"><feGaussianBlur stdDeviation=".28"/></filter></defs><g filter="url(#sb385)"><ellipse cx="28" cy="56.400" rx="26" ry="1.600" fill="#b9c0c6" opacity=".5"/><path d="M6.800 53.500C6.600 48 6.600 43 7.200 39.600c1.500-.9 3.200-.5 4.300.8 1.800 2.200 4.700 2.600 7.200 1.500 2.400-1.300 4-3.300 5.600-4.700 1.600-.5 2.900.2 3.800 1.300C33 42.500 40 45.700 46 47.800c2.600 1 5 2 5.600 3.900.3 1.700-.6 2.800-2.200 3.400C38 57.300 20 57.300 6.800 53.500z" fill="#fbfcfd"/><path d="M7.200 39.600c1.500-.9 3.200-.5 4.300.8l3.200 2.200-.6 3.600-7.300 1.600C6.700 45 6.800 42 7.200 39.600z" fill="#17191d"/><path d="M6.800 52.200C20 56 38 56 51.400 52.500" fill="none" stroke="#dfe3e7" stroke-width="1"/><path d="M22.600 52 26.400 43.400M26.800 53 30.400 45M31.200 53.600 34.400 46.800" stroke="#15171a" stroke-width="1.900"/><path d="M40 46.500c4 1.500 9 3 11 5" fill="none" stroke="#e3e7ea" stroke-width="1.400"/></g></svg><svg class="a" style="left:445.00px;top:293.300px;" width="59.300" height="59.100" viewBox="0 0 59.300 59.100"><defs><filter id="sb445"><feGaussianBlur stdDeviation=".28"/></filter></defs><g filter="url(#sb445)"><ellipse cx="29" cy="56.500" rx="25" ry="1.600" fill="#b9c0c6" opacity=".45"/><path d="M4.500 52.500C5 47 7 42 10.500 38.500c2-1.500 4.500-.5 6 1 2 .8 4-.5 5.600-2.200 1.500-1.800 3-2.600 4.500-2.200 3 1.500 6 4 10 6.500 5 2.600 11 4 14 6.500 1.600 1.700 1.600 4 .4 5.400C41 57.600 18 57.600 5.200 55.600 4.400 54.800 4.300 53.600 4.500 52.500z" fill="#f5f6f8"/><path d="M5 53.500c3-1.500 6-3 8.500-6 2-2.600 3.500-5 6-5.600" fill="none" stroke="#dde1e6" stroke-width="1.600"/><path d="M21 47c5 1.500 12 2 18 1.200 4-.5 8 0 11.500 1.800" fill="none" stroke="#e6e4df" stroke-width="2.400"/><path d="M5 55.400C18 57.600 40 57.600 51 54" fill="none" stroke="#cfd5da" stroke-width="1.100"/><path d="M31.800 48.700 34.600 46.800 39 48.200 38 50.200z" fill="#15171a"/><path d="M22 39c2 1 4.500 2.500 7 4.500" fill="none" stroke="#c9cfd6" stroke-width=".8"/></g></svg><div style="left:517.20px;top:307.00px;width:7.40px;height:28.60px;background:#e7e8e9;"></div><span class="t" style="left:516.700px;top:319.600px;width:8.400px;height:3.400px;font-size:2.400px;line-height:3.400px;font-weight:700;color:#2f3338;letter-spacing:.25px;text-align:center;transform:rotate(-90deg) scaleX(.95);transform-origin:50% 50%;">FEEDBACK</span><div style="left:526.10px;top:262.00px;width:1.40px;height:16.20px;background:#6c7278;border-radius:1px;"></div><div style="left:244.00px;top:248.60px;width:0.80px;height:155.40px;background:#e3e7ea;"></div><svg class="a" style="left:250.600px;top:343.200px;" width="4" height="5" viewBox="0 0 4 5"><path d="M.3 .3 3.200 2.800 1.800 3 2.300 4.400 1.500 4.600 1.100 3.300 .3 4z" fill="#e5148c"/></svg></div></div><svg class="a" style="left:527.8px;top:226.6px;" width="94.4" height="71" viewBox="0 0 94.4 71">
<defs><filter id="b1" x="-30%" y="-30%" width="160%" height="160%"><feGaussianBlur stdDeviation="3"/></filter>
<filter id="b2" x="-30%" y="-30%" width="160%" height="160%"><feGaussianBlur stdDeviation="1.5"/></filter>
<filter id="b3" x="-30%" y="-30%" width="160%" height="160%"><feGaussianBlur stdDeviation=".8"/></filter>
<filter id="b4" x="-30%" y="-30%" width="160%" height="160%"><feGaussianBlur stdDeviation=".45"/></filter>
<linearGradient id="wbg" x1="0" y1="0" x2="1" y2="0"><stop offset="0" stop-color="#625440"/><stop offset=".4" stop-color="#594b38"/><stop offset=".8" stop-color="#776b55"/><stop offset="1" stop-color="#82775f"/></linearGradient>
<clipPath id="wc"><rect width="94.4" height="71"/></clipPath></defs>
<g clip-path="url(#wc)">
<rect width="94.4" height="71" fill="url(#wbg)"/>
<rect x="-6" y="-6" width="44" height="26" fill="#4b3f2f" filter="url(#b1)" opacity=".8"/>
<rect x="-5" y="44" width="31" height="32" fill="#26150f" filter="url(#b1)"/>
<rect x="88" y="46" width="12" height="22" fill="#241a14" filter="url(#b2)"/>
<path d="M2 71C6 60 13 54 24 52l8 19z" fill="#c0641f" filter="url(#b2)"/>
<path d="M57 2C45 2 38 11 36 25 33 40 27 54 20 71H94.400C92 58 86 46 83 33 80 15 72 2 57 2z" fill="#7a4a2a" filter="url(#b2)"/>
<path d="M39 22c-1 6-2 12-4 18-3 11-7 21-10 31h15c3-14 5-30 6-44z" fill="#a87040" filter="url(#b2)" opacity=".9"/>
<path d="M79 26c2 12 5 22 9 32l4 13H79c-1-15-2-30-4-42z" fill="#946038" filter="url(#b2)" opacity=".85"/>
<path d="M43 9c-4 7-7 17-8 28" stroke="#36200f" stroke-width="3.5" fill="none" filter="url(#b2)" opacity=".75"/>
<path d="M49 61h24l3 10H46z" fill="#b99d90" filter="url(#b2)"/>
<path d="M58.500 10.500C50 10.500 44.500 17.500 45 29c.4 9.500 2.800 17 6.500 23 2.800 4.500 6.300 6.500 9.500 6.500 3.700 0 7.800-3 10.500-8.300 2.800-5.800 4.300-13.500 4-21.700C75.200 17 68.500 10.500 58.500 10.500z" fill="#c3aaa2" filter="url(#b3)"/>
<path d="M47 14c3-4 8-5.500 12-5.500 6 0 11 2.500 14 7" stroke="#8a5a3a" stroke-width="3" fill="none" filter="url(#b2)" opacity=".7"/>
<path d="M68 14c5 3.500 7.500 9 8 16 .4 7.500-1 15-3.500 20.500" stroke="#9c7f74" stroke-width="3.5" fill="none" filter="url(#b2)" opacity=".7"/>
<ellipse cx="58" cy="37" rx="6" ry="9" fill="#d9c4bd" filter="url(#b2)" opacity=".8"/>
<path d="M44 10c3-5 9-7.500 14-7.500 7 0 12.500 3 16 8.500" stroke="#4f301c" stroke-width="4" fill="none" filter="url(#b2)" opacity=".7"/><ellipse cx="51.300" cy="28" rx="5" ry="3" fill="#8a6d66" filter="url(#b3)" opacity=".55"/><ellipse cx="67.600" cy="27.800" rx="5" ry="3" fill="#8a6d66" filter="url(#b3)" opacity=".55"/>
<path d="M47 24c2.300-1.300 5.500-1.500 8.500-.5M63.500 23.500c2.800-1 5.800-1 8.200.2" stroke="#5b3d2c" stroke-width="1.2" fill="none" filter="url(#b3)" opacity=".85"/>
<ellipse cx="51.3" cy="28.6" rx="3.4" ry="1.6" fill="#46506a" filter="url(#b4)"/>
<ellipse cx="67.6" cy="28.4" rx="3.4" ry="1.6" fill="#46506a" filter="url(#b4)"/>
<path d="M56.500 39.500c1.500 1 3.500 1 5 .2" stroke="#a98a82" stroke-width="1.2" fill="none" filter="url(#b4)"/>
<ellipse cx="59" cy="46.8" rx="4.4" ry="1.6" fill="#b07a74" filter="url(#b4)"/>
<path d="M52 3c4-1.500 10-1.500 14 0" stroke="#b98a5e" stroke-width="2" fill="none" filter="url(#b2)" opacity=".55"/>
</g></svg>
<svg class="a" style="left:422.600px;top:302.200px;" width="27" height="27" viewBox="0 0 27 27"><circle cx="13.500" cy="13.500" r="12.100" fill="#58595b" stroke="#fff" stroke-width="1.400"/><path d="M9.700 7.400 21 13.500 9.700 19.600z" fill="#fff"/></svg><div style="left:243.60px;top:474.60px;width:378.90px;height:42.40px;background:linear-gradient(180deg,#0a2b47 0,#0a2742 40%,#071a2e 100%);"></div><svg class="a" style="left:250px;top:480px;" width="367" height="11" viewBox="0 0 367 11"><rect x=".4" y="1.4" width="365.6" height="8.2" fill="#3c566a"/><rect x=".4" y="1.4" width="176.6" height="8.2" fill="#7b94a6"/><rect x=".4" y="1.4" width="151.6" height="8.2" fill="#f1f1f1"/></svg><svg class="a" style="left:266.600px;top:498px;" width="9" height="10" viewBox="0 0 9 10"><path d="M1.200 1 7.900 5 1.200 9z" fill="#fff"/></svg><svg class="a" style="left:286.20px;top:498.35px;" width="10" height="10" viewBox="0 0 10 10"><g fill="none" stroke="#f3f3f3" stroke-width=".95"><path d="M2.300 2.500A3.900 3.900 0 1 1 1.100 5.300"/><path d="M.8 1.300 2.500 2.700 3.300 .8" stroke-width=".8"/></g><rect x="3.5" y="4.4" width="3" height="2.1" fill="#f3f3f3" opacity=".42"/></svg><svg class="a" style="left:297.40px;top:498.35px;" width="10" height="10" viewBox="0 0 10 10"><g transform="translate(10 0) scale(-1 1)" fill="none" stroke="#f3f3f3" stroke-width=".95"><path d="M2.300 2.500A3.900 3.900 0 1 1 1.100 5.300"/><path d="M.8 1.300 2.500 2.700 3.300 .8" stroke-width=".8"/></g><rect x="3.5" y="4.4" width="3" height="2.1" fill="#f3f3f3" opacity=".42"/></svg><span class="t" style="left:320.40px;top:497.40px;font-size:8.3px;line-height:10px;font-weight:400;color:#f2f4f6;transform:scaleX(0.8868);">1.00x</span><svg class="a" style="left:355.600px;top:498.500px;" width="9" height="9" viewBox="0 0 9 9"><path d="M.6 3.100H2.300L4.700 1V8L2.300 5.900H.6z" fill="#fff"/><path d="M5.700 3.100Q6.500 4.500 5.700 5.900M6.800 2Q8.200 4.500 6.800 7" fill="none" stroke="#fff" stroke-width=".8"/></svg><span class="t" style="left:384.00px;top:498.00px;font-size:8.3px;line-height:10px;font-weight:400;color:#f2f4f6;">00:03:46 / 00:09:06</span><svg class="a" style="left:469.800px;top:497.200px;" width="10" height="10" viewBox="0 0 10 10" fill="none" stroke="#fff" stroke-width=".95"><path d="M5 .7V6.300M2.700 4.200 5 6.500 7.300 4.200"/><path d="M.9 6.500V8.900H9.100V6.500"/></svg><div style="left:486.60px;top:500.00px;width:8.60px;height:5.80px;background:#f4f4f4;border-radius:1px;"></div><div style="left:488.00px;top:503.60px;width:5.80px;height:0.80px;background:#7b8896;"></div><svg class="a" style="left:601.500px;top:498.500px;" width="9" height="9" viewBox="0 0 9 9" fill="none" stroke="#fff" stroke-width="1"><path d="M1.300 7.700 7.700 1.300"/><path d="M4.900 .9H8.100V4.100" /><path d="M.9 4.900V8.100H4.100"/></svg></div></div>
</div>
</body></html>
